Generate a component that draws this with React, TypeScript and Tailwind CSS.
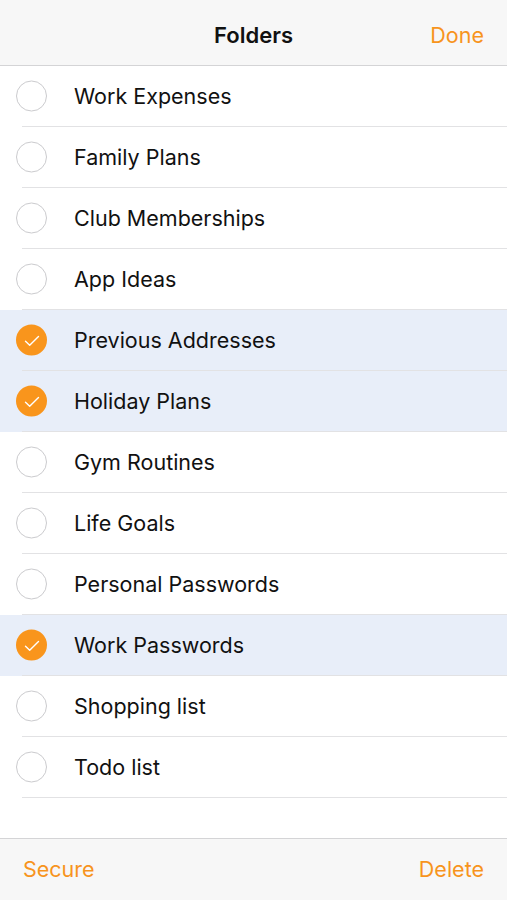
import React from 'react';

const folders = [
  { name: 'Work Expenses', selected: false },
  { name: 'Family Plans', selected: false },
  { name: 'Club Memberships', selected: false },
  { name: 'App Ideas', selected: false },
  { name: 'Previous Addresses', selected: true },
  { name: 'Holiday Plans', selected: true },
  { name: 'Gym Routines', selected: false },
  { name: 'Life Goals', selected: false },
  { name: 'Personal Passwords', selected: false },
  { name: 'Work Passwords', selected: true },
  { name: 'Shopping list', selected: false },
  { name: 'Todo list', selected: false },
];

function CheckCircle({ checked }: { checked: boolean }) {
  if (checked) {
    return (
      <div className="w-[31px] h-[31px] rounded-full bg-[#f9951c] flex items-center justify-center">
        <svg width="18" height="18" viewBox="0 0 18 18" fill="none">
          <path d="M2.5 9.8l4.2 4L15.5 5" stroke="white" strokeWidth="1.4" strokeLinecap="round" strokeLinejoin="round" />
        </svg>
      </div>
    );
  }
  return <div className="w-[31px] h-[31px] rounded-full border-[1.5px] border-[#cbcbce]" />;
}

export default function App() {
  return (
    <div className="w-[507px] h-[900px] bg-white flex flex-col font-['Inter',sans-serif] text-[#111]">
      <div className="h-[66px] shrink-0 bg-[#f7f7f7] border-b border-[#d4d4d6] flex items-center pt-[5px] relative">
        <div className="flex-1 text-center text-[22px] font-semibold">Folders</div>
        <div className="absolute right-[23px] text-[21.5px] text-[#f7941d]">Done</div>
      </div>

      <div className="flex-1">
        {folders.map((f) => (
          <div key={f.name} className={`h-[61px] flex ${f.selected ? 'bg-[#e8eef9]' : 'bg-white'}`}>
            <div className="w-[22px] shrink-0" />
            <div className="flex-1 flex items-center border-b border-[#e2e2e4] relative">
              <div className="absolute left-[-6px] top-1/2 -translate-y-1/2">
                <CheckCircle checked={f.selected} />
              </div>
              <span className="ml-[52px] text-[21.5px]">{f.name}</span>
            </div>
          </div>
        ))}
      </div>

      <div className="h-[62px] shrink-0 bg-[#f7f7f7] border-t border-[#d4d4d6] flex items-center justify-between px-[23px] text-[21.5px] text-[#f7941d]">
        <span>Secure</span>
        <span>Delete</span>
      </div>
    </div>
  );
}
